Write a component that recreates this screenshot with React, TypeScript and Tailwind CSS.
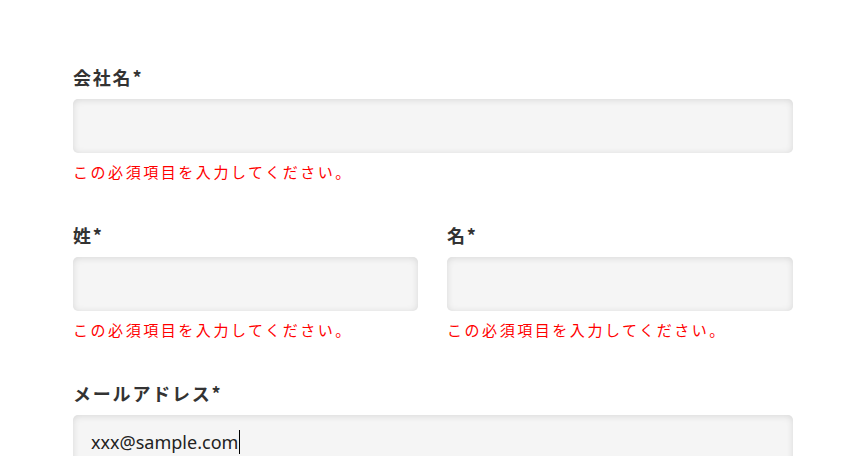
const jp = '[font-family:"Noto_Sans_CJK_JP","Noto_Sans",sans-serif]';

function Field({ label, error, value }: { label: string; error?: boolean; value?: string }) {
  return (
    <div className="flex flex-col">
      <label className="text-[18px] font-bold leading-[26px] tracking-[0.1em] text-[#333]">{label}</label>
      <div className="mt-[9px] flex h-[54px] items-center rounded-[5px] bg-[#f5f5f5] px-[18px] shadow-[inset_0_1px_7px_rgba(0,0,0,0.12)]">
        {value && (
          <span className="flex items-center text-[18px] text-[#222] [font-family:'Noto_Sans',sans-serif]">
            {value}
            <span className="ml-px h-[24px] w-px bg-black" />
          </span>
        )}
      </div>
      {error && (
        <p className="mt-[9px] text-[15px] leading-[20px] tracking-[0.17em] text-[#ff0000]">
          この必須項目を入力してください。
        </p>
      )}
    </div>
  );
}

export default function App() {
  return (
    <div className={`h-[456px] w-[863px] overflow-hidden bg-white ${jp}`}>
      <form className="box-content flex w-[720px] flex-col gap-[40px] pl-[73px] pt-[64px]">
        <Field label="会社名*" error />
        <div className="grid grid-cols-[345px_1fr] gap-[29px]">
          <Field label="姓*" error />
          <Field label="名*" error />
        </div>
        <Field label="メールアドレス*" value="xxx@sample.com" />
      </form>
    </div>
  );
}
